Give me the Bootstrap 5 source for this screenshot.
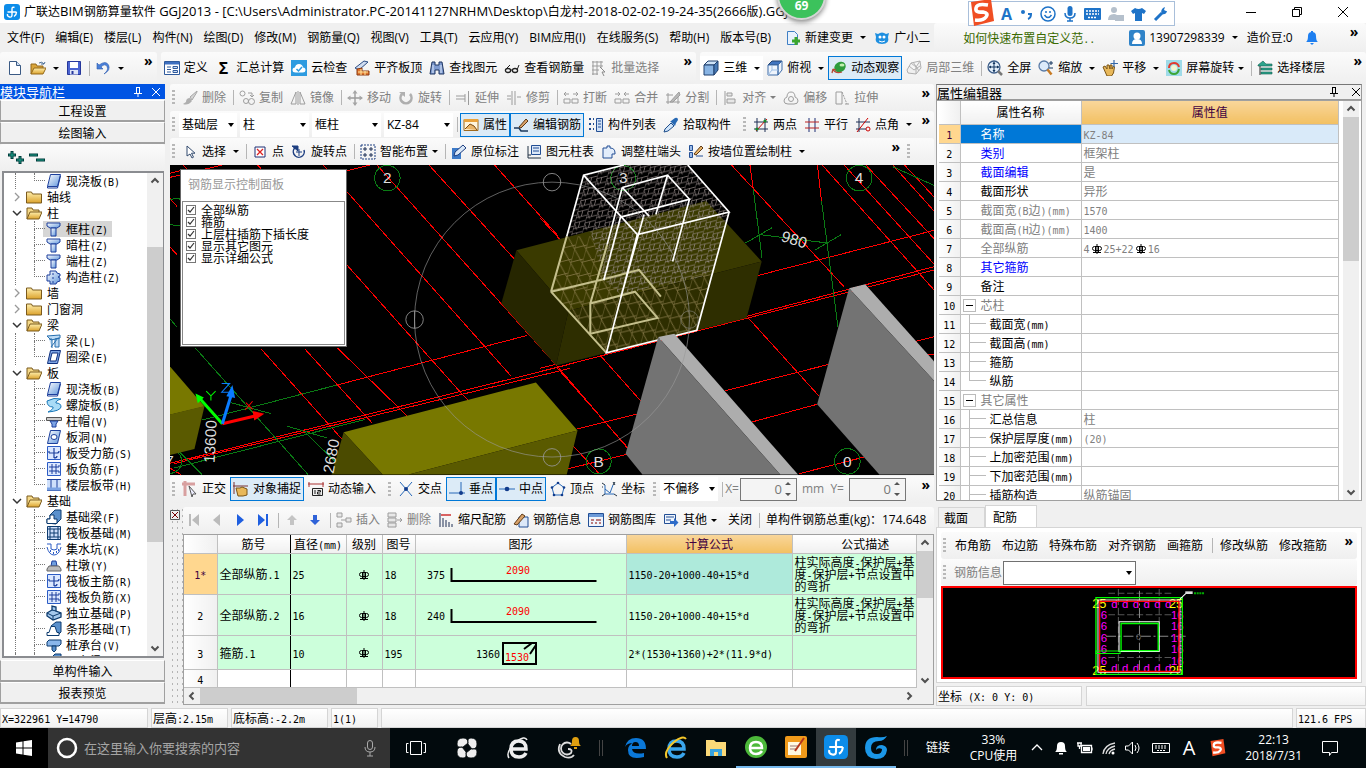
<!DOCTYPE html>
<html lang="zh-CN">
<head>
<meta charset="utf-8">
<meta name="viewport" content="width=device-width, initial-scale=1">
<title>广联达BIM钢筋算量软件 GGJ2013</title>
<link href="https://cdn.jsdelivr.net/npm/bootstrap@5.3.0/dist/css/bootstrap.min.css" rel="stylesheet">
<style>
:root{--line:#c0c0c0;--edge:#a0a0a0;--face:#f0f0f0}
body{font-family:"Open Sans","Noto Sans CJK SC",sans-serif;font-size:12px;line-height:16px;color:#000;background:var(--face);height:100vh;min-height:600px;overflow:hidden}
.song{font-family:"Noto Sans CJK SC",sans-serif;font-size:12px}
.uifont{font-family:"Open Sans","Noto Sans CJK SC",sans-serif}
.lt{font-family:"DejaVu Sans Mono",monospace;font-size:10px;line-height:0;white-space:pre}
.ic{width:16px;height:16px;flex:none}
.titlebar{height:23px;background:#fff}
.titlebar .seg{font-size:13px}
.menubar{height:29px;padding-left:2px}
.menubar a{color:#000;text-decoration:none;padding:0 6px 0 5px;white-space:nowrap}
.menubar a.inline-ic{display:inline-flex;align-items:center;gap:4px;padding:0 4px}
.menubar a.tip{color:#3a6a00}
.pill{background:linear-gradient(#fbfbfb,#efefef);border-radius:3px}
.mainbar{height:32px}
.tb{--bs-btn-padding-x:2px;--bs-btn-padding-y:0;--bs-btn-font-size:12px;--bs-btn-line-height:16px;--bs-btn-border-radius:0;--bs-btn-color:#000;--bs-btn-disabled-color:#808080;--bs-btn-disabled-opacity:1;--bs-btn-disabled-border-color:transparent;display:inline-flex;align-items:center;gap:4px;height:24px;white-space:nowrap;flex:none}
.tb:disabled .ic{filter:grayscale(1);opacity:.55}
.tb.on{background:#dcebf7;border-color:#0078d7}
.dd::after{content:"";width:0;height:0;border:3px solid transparent;border-top-color:currentColor;border-bottom:0;margin-left:3px}
.dd.tight::after{margin-left:0}
.bars{gap:1px;min-width:0;overflow:hidden}
.vsep{width:1px;height:15px;background:#b5b5b5;margin:0 1px 0 3px;flex:none}
.grip{width:3px;height:15px;flex:none;margin:0 3px 0 2px;background:repeating-linear-gradient(#b8b8b8 0 2px,transparent 2px 4px)}
.more{font-weight:700;font-size:14px;line-height:12px;align-self:flex-start;margin:3px 4px 0 auto;background:none;border:0;padding:0;flex:none;color:#000}
.combo.form-select{border:0;border-radius:0;height:24px;padding:0 14px 0 3px;font-size:12px;line-height:16px;color:#000;background-color:#fff;background-position:right 3px center;background-size:6px 4px;background-image:url("data:image/svg+xml,%3Csvg xmlns='http://www.w3.org/2000/svg' viewBox='0 0 6 4'%3E%3Cpath d='M0 0h6L3 4z'/%3E%3C/svg%3E");width:69px;flex:none}
.combo.next{margin-left:2px}
.combo.short{width:58px}
.combo.framed{border:1px solid #707070;width:133px}
.spin{width:57px;height:23px;border:1px solid #777;background:#f4f4f4;flex:none}
.spin input{width:41px;border:0;background:none;text-align:right;color:#777;padding:0;font-size:13px}
.spin svg{width:12px;height:18px}
.leftcol{width:165px;flex:none}
.centercol{margin:0 2px 0 5px}
.paneltitle{height:15px;font-size:13px;line-height:15px;flex:none}
.paneltitle button{border:0;background:none;padding:0;color:inherit;line-height:0}
.bluehead{background:#0054e3;color:#fff;margin-bottom:1px}
.navbtn{height:22px;border:1px solid #a0a0a0;border-top-color:#fff;border-bottom-width:2px;background:var(--face);padding:1px 0 0;text-align:center;border-radius:0;flex:none;line-height:16px}
.navbtn.last{margin-bottom:3px}
.treebox{border:2px solid #8a8c90;border-right-width:1px;background:#fff;margin:0 1px 2px 2px}
.tree li{height:16px;display:flex;align-items:center;position:relative;white-space:nowrap}
.tree .node{padding-left:8px}
.tree .node .ic{margin:0 5px 0 4px}
.tree .tw{width:10px;height:10px}
.tree .leaf{padding-left:42px}
.tree .leaf::before{content:"";position:absolute;left:30px;width:11px;top:0;height:8px;border-left:1px dotted #777;border-bottom:1px dotted #777}
.tree .leaf::after{content:"";position:absolute;left:11px;top:0;height:16px;border-left:1px dotted #777}
.tree .leaf.mid .tail{position:absolute;left:30px;top:8px;height:8px;border-left:1px dotted #777}
.tree .leaf span.name{padding:0 4px;line-height:16px}
.tree .leaf.sel{z-index:0}
.tree .leaf.sel .back{position:absolute;left:39px;width:69px;top:0;height:16px;background:#d6d6d6;z-index:-1}
.sb{background:#f0f0f0;flex:none}
.sb.v{width:16px}.sb.h{height:16px}
.sb .thumb{background:#cdcdcd}
.sb svg{width:16px;height:16px;flex:none}
.view3d{background:#000;min-height:0}
.view3d>svg{width:100%;height:100%;display:block}
.float-panel{left:10px;top:4px;width:167px;height:178px;background:#fff;border:1px solid #666}
.float-panel .cap{height:31px;color:#999;padding:7px 7px 0}
.float-panel .list{border:1px solid #888;height:144px;margin:0 1px;padding:2px 3px}
.float-panel label{height:12px;line-height:12px;gap:5px}
.float-panel input{appearance:none;width:10px;height:10px;border:1px solid #777;margin:0;flex:none;background:#fff url("data:image/svg+xml,%3Csvg xmlns='http://www.w3.org/2000/svg' viewBox='0 0 8 8'%3E%3Cpath d='M1 4l2 2 4-5' fill='none' stroke='%23333' stroke-width='1.2'/%3E%3C/svg%3E")}
.rowbar{height:27px;flex:none}
.snapbar{margin:1px 0 4px}
.gripstrip{width:13px;background-image:radial-gradient(circle,#b4b4b4 1px,transparent 1px);background-size:5px 6px;flex:none}
.frame{border:1px solid var(--edge);background:#fff}
.gridframe{margin-bottom:2px}
.data{width:100%;table-layout:fixed;border-collapse:collapse;line-height:12px}
.data th,.data td{border:1px solid var(--line);padding:0 2px;font-weight:400;overflow:hidden;white-space:nowrap;vertical-align:middle}
.data thead th{background:linear-gradient(#fff,#f0f0f0);text-align:center;border-top:0}
.data tr>:first-child{border-left:0;text-align:center;background:linear-gradient(90deg,#fff,#f0f0f0)}
.data .hot{background:linear-gradient(#f9d69a,#f2c062)!important;color:#400040}
.data .cur{background:#ffd78f!important;color:#400040}
.bars-grid thead th{height:19px}
.bars-grid .bar td{background:#ccffdb}
.bars-grid .tall td,.bars-grid .tall th{height:41px}
.bars-grid .mid td,.bars-grid .mid th{height:34px}
.bars-grid .low td,.bars-grid .low th{height:18px}
.bars-grid .bar td.pick{background:#aeeadb}
.bars-grid tr>:nth-child(2){border-right:1px solid #000}
.bars-grid td .shape{display:block;width:205px;height:32px}
.prop thead th{height:23px;font-size:12px}
.prop tbody td,.prop tbody th{height:19px;line-height:15px}
.prop .nm{padding-left:20px;position:relative}
.prop .nm.sub{padding-left:29px}
.prop .nm.sub::before{content:"";position:absolute;left:8px;top:-1px;width:17px;height:10px;border-left:1px solid #bbb;border-bottom:1px solid #bbb}
.prop .nm.sub.cont::after{content:"";position:absolute;left:8px;top:9px;height:10px;border-left:1px solid #bbb}
.prop .fold{position:absolute;left:2px;top:3px;width:13px;height:13px;border:1px solid #bbb;background:#fff;padding:0;line-height:0}
.prop .fold::after{content:"";display:block;width:7px;height:1px;background:#000;margin:0 auto}
.prop .v{color:#808080}
.prop tr.first .nm{background:#0078d7;color:#fff}
.prop tr.first .v{background:#d9eaf9}
.c-blue{color:#00f}.c-gray{color:#808080}
.rebar{width:12px;height:12px;vertical-align:-2px;margin:0 1px}
.rightcol{width:430px;flex:none}
.whead{border:1px solid #999;border-top-color:#777;height:16px;flex:none}
.propframe{padding:0 2px}
.tabs2{height:22px;padding-left:2px}
.tabs2 button{border:1px solid #d5d5d5;border-bottom:0;background:var(--face);height:20px;padding:0 5px;text-align:left;width:47px;font-size:12px}
.tabs2 button.act{background:#fff;height:22px;width:52px;padding:0 7px}
.txtbar .tb{padding:0 4px}
.tabpage{border-color:#d5d5d5;padding:4px 4px 3px}
.section{border:2px solid #f00;background:#000;height:93px}
.section svg{width:100%;height:100%;display:block}
.cell{border:1px solid #d5d5d5;background:linear-gradient(#fff,#f2f2f2);height:20px;line-height:17px;padding:0 1px;white-space:nowrap}
.coordbar{margin:3px 0 1px}
.statusbar{height:21px;gap:3px;flex:none;padding-top:1px}
.taskbar{height:40px;background:#020a0d;color:#fff;flex:none}
.taskbar button{border:0;background:none;padding:0;width:40px;height:40px;display:flex;align-items:center;justify-content:center;color:#fff;flex:none}
.taskbar .pin svg{width:24px;height:24px}
.taskbar .far{width:51px}
.taskbar .run{border-bottom:2px solid #76b9ed}
.taskbar .focus{background:#333b3e}
.taskbar .startbtn{width:48px;background:#000}
.search{width:342px;background:#333;color:#aaa;gap:6px}
.search input{border:0;background:none;color:#a5a5a5;font-size:13px;padding:0;outline:0;min-width:0}
.search input::placeholder{color:#a5a5a5}
.taskbar .tray button{width:24px}
.tray svg{width:18px;height:18px}
.ime{left:968px;top:1px;width:207px;height:25px;background:#fff;border:1px solid #a9bfda;z-index:5;gap:7px;padding-left:32px}
.ime button{border:0;background:none;padding:0;color:#1e73c8;line-height:0}
.ime .logo2{left:-2px;top:-3px}
.ball{left:777px;top:-29px;width:49px;height:49px;border-radius:50%;background:#3cc25c;border:2px solid #d5d5d5;box-shadow:0 2px 5px #888;color:#fff;font-weight:700;text-align:center;padding-top:27px;z-index:5}
.winbtn button{width:46px;border:0;background:none;padding:0}
</style>
</head>
<body class="d-flex flex-column m-0 position-relative">

<svg width="0" height="0" class="position-absolute" aria-hidden="true"><defs>
<linearGradient id="gb" x1="0" y1="0" x2="1" y2="1"><stop offset="0" stop-color="#fff"/><stop offset="1" stop-color="#5f95dc"/></linearGradient>
<linearGradient id="gy" x1="0" y1="0" x2="0" y2="1"><stop offset="0" stop-color="#ffefad"/><stop offset="1" stop-color="#dba22c"/></linearGradient>
<symbol id="app" viewBox="0 0 16 16"><rect width="16" height="16" rx="3" fill="#0c8ce9"/><path d="M10.500 3.500Q8 2.500 8 5v6q0 2.500-2.500 2Q3 12.500 3.500 10M3.500 8h9M12.500 8q0 3-2.500 4.500" fill="none" stroke="#fff" stroke-width="1.400"/></symbol>
<symbol id="new" viewBox="0 0 16 16"><path d="M2.500 1.500h7l4 4v9h-11z" fill="#fff" stroke="#3b5a84"/><path d="M9.500 1.500v4h4" fill="#cfe0f5" stroke="#3b5a84"/></symbol>
<symbol id="open" viewBox="0 0 16 16"><path d="M1 14V4h5l1 2h6v2" fill="#d9a53a" stroke="#94691a"/><path d="M1 14l3-6h12l-3 6z" fill="url(#gy)" stroke="#94691a"/><path d="M9 3q3-2 5 1l1-2M14 4l-3 0" fill="none" stroke="#466a93"/></symbol>
<symbol id="save" viewBox="0 0 16 16"><path d="M1.500 1.500h13v13h-13z" fill="#4a63d0" stroke="#26379b"/><path d="M4 2h8v6H4z" fill="#fff"/><path d="M4 10h8v4.500H4z" fill="#dfe5f7"/><path d="M5.500 11h2v3h-2z" fill="#26379b"/></symbol>
<symbol id="undo" viewBox="0 0 16 16"><path d="M2 3v6h6L6 7q4-4 6-.500T9 14q7-4 4.500-9T4 5z" fill="#4b80d8" stroke="#2b5bb0" stroke-width=".6"/></symbol>
<symbol id="def" viewBox="0 0 16 16"><path d="M.5 1.500h15v13H.5z" fill="#fff" stroke="#2f5a9c"/><path d="M1 2h14v2.500H1z" fill="#3d6fc0"/><path d="M3 7h4M3 9.500h4M3 12h4" stroke="#2f5a9c"/><path d="M9 6.500h4.500v2H9zM9 10.500h4.500v2H9z" fill="#cfdff5" stroke="#2f5a9c"/></symbol>
<symbol id="cloud" viewBox="0 0 16 16"><path d="M0 0h16v16H0z" fill="#2d9be0"/><path d="M4.500 12.500q-3 0-3-2.500t2.500-2.500Q4.500 4 8 4t4 3.500q2.500 0 2.500 2.500t-3 2.500z" fill="#fff"/><path d="M5.500 9l2 2 3.500-4" fill="none" stroke="#2d9be0" stroke-width="1.500"/></symbol>
<symbol id="flush" viewBox="0 0 16 16"><path d="M1 8l9-7 4 1-9 8z" fill="#cfdcf0" stroke="#2c4d84"/><path d="M3 9v6h12v-4H8V8z" fill="#e0762e" stroke="#8b3a12"/><path d="M4 12h10M7 9v6M11 11v4" stroke="#ffe6a0"/></symbol>
<symbol id="bino" viewBox="0 0 16 16"><path d="M3 2h3v3h4V2h3l2 12h-5v-4H6v4H1z" fill="#7f9bd0" stroke="#1f3560"/><path d="M4 5v8M12 5v8" stroke="#dfe9fa"/></symbol>
<symbol id="glass" viewBox="0 0 16 16"><ellipse cx="4" cy="10.500" rx="2.600" ry="2" fill="none" stroke="#222" stroke-width="1.300"/><ellipse cx="11" cy="10.500" rx="2.600" ry="2" fill="none" stroke="#222" stroke-width="1.300"/><path d="M6.500 10h2M2 9l4-4M13 10l2-5" fill="none" stroke="#222"/></symbol>
<symbol id="batch" viewBox="0 0 16 16"><path d="M1 2h11M1 6h11M1 10h7M1 14h6M2 1v14M6 1v14M10 1v7" stroke="#555" fill="none"/><path d="M9 7l5 5-3 0 2 4" fill="#fff" stroke="#333"/></symbol>
<symbol id="cube" viewBox="0 0 16 16"><path d="M1 5l4-4h10l-4 4z" fill="#cfe3f7" stroke="#20406e"/><path d="M1 5h10v10H1z" fill="#88b4e4" stroke="#20406e"/><path d="M11 5l4-4v9l-4 5z" fill="#4778b4" stroke="#20406e"/></symbol>
<symbol id="topv" viewBox="0 0 16 16"><path d="M1 5l4-4h10l-4 4z" fill="#3f74c0" stroke="#20406e"/><path d="M1 5h10v10H1zM11 5l4-4v9l-4 5z" fill="#eef4fc" stroke="#3f6ca8"/><path d="M5 6v4L1 15M5 10h6" fill="none" stroke="#9fc0e6"/></symbol>
<symbol id="orbit" viewBox="0 0 16 16"><ellipse cx="9" cy="7" rx="6" ry="5" fill="#2d9c3c" transform="rotate(-35 9 7)"/><ellipse cx="11" cy="5" rx="2.500" ry="1.500" fill="#bff0b0"/><path d="M2 9q2 5 9 3M2 9l-1 4M2 9l3 1" fill="none" stroke="#b54a35" stroke-width="1.300"/></symbol>
<symbol id="part3" viewBox="0 0 16 16"><path d="M1 10l4-7 9-2 1 7-5 6-8-1zM5 3l5 4 4-6M10 7v7M3 6l5 4 6-4M7 2l6 9" fill="#eee" stroke="#777"/></symbol>
<symbol id="full" viewBox="0 0 16 16"><circle cx="7" cy="7" r="6" fill="#e4effb" stroke="#3f5f8a" stroke-width="1.300"/><path d="M7 2.500v9M2.500 7h9" stroke="#12355f"/><path d="M7 1.500L5.500 4h3zM7 12.500L5.500 10h3zM1.500 7L4 5.500v3zM12.500 7L10 5.500v3z" fill="#12355f"/><path d="M11 11l4 4" stroke="#777" stroke-width="2.500"/></symbol>
<symbol id="zoomi" viewBox="0 0 16 16"><circle cx="6" cy="6" r="5" fill="#dceafa" stroke="#5a7ba6" stroke-width="1.300"/><path d="M9.500 9.500l4 5" stroke="#c77a23" stroke-width="2.500"/><path d="M13 1v4M11 3h4M11 8h4" stroke="#12355f"/></symbol>
<symbol id="pan" viewBox="0 0 16 16"><path d="M1 7l2-1 2 3V5l2 0 1 4 0-4h2l0 4 1.500-3 1 1-1 6-2 3H5z" fill="#e8b85a" stroke="#7a5415"/><path d="M12 0v7M8.500 3.500H16" stroke="#3468a8" stroke-width="1.200"/></symbol>
<symbol id="rotv" viewBox="0 0 16 16"><path d="M0 0h16v16H0z" fill="#9fdbe8"/><path d="M3 8q0-5 5-5 4 0 5 4" fill="none" stroke="#e23b2e" stroke-width="2"/><path d="M13 9q-1 5-5 5-4 0-5-4" fill="none" stroke="#3ba537" stroke-width="2"/><circle cx="8" cy="8" r="3" fill="#f3f7d0"/></symbol>
<symbol id="floors" viewBox="0 0 16 16"><path d="M1 5l5-4 3 3H15v2H1zM4 8h11v2H4zM4 12h11v2H4z" fill="#2ca48c" stroke="#155f52" stroke-width=".6"/><path d="M3 6v9" stroke="#222"/></symbol>
<symbol id="brush" viewBox="0 0 16 16"><path d="M15 1L8 7l2 3 5-8z" fill="#bbb" stroke="#666"/><path d="M8 8q-4 0-4 4l-3 2q5 2 9-3z" fill="#777"/></symbol>
<symbol id="copy" viewBox="0 0 16 16"><circle cx="3.500" cy="3.500" r="2.500" fill="none" stroke="#555"/><circle cx="7" cy="11" r="2.500" fill="none" stroke="#555"/><circle cx="12.500" cy="11.500" r="3" fill="none" stroke="#555"/><path d="M9 3h4v4M13 7l-2-2M13 7l2-2" fill="none" stroke="#555"/></symbol>
<symbol id="mirror" viewBox="0 0 16 16"><path d="M6 2v12H1zM10 2v12h5z" fill="none" stroke="#555"/><path d="M8 1v14" stroke="#555"/></symbol>
<symbol id="move" viewBox="0 0 16 16"><path d="M8 1v14M1 8h14" stroke="#555" stroke-width="1.400"/><path d="M8 0L5.500 3.500h5zM8 16l-2.500-3.500h5zM0 8l3.500-2.500v5zM16 8l-3.500-2.500v5z" fill="#666"/></symbol>
<symbol id="rot" viewBox="0 0 16 16"><path d="M4 4a5.500 5.500 0 1 0 8 0" fill="none" stroke="#777" stroke-width="2.600"/><path d="M1 2h6v5z" fill="#777"/></symbol>
<symbol id="extend" viewBox="0 0 16 16"><path d="M1 6h9M1 9h9M10 4v8M13.500 1v14" stroke="#555" fill="none"/></symbol>
<symbol id="trim" viewBox="0 0 16 16"><path d="M6 1v14M9 1v14M1 6h4M1 9h4M11 7h4" stroke="#555" fill="none"/></symbol>
<symbol id="brk" viewBox="0 0 16 16"><path d="M1 9h6v4H1zM9 9h6v4H9z" fill="none" stroke="#555"/><path d="M1 4h5M3 2L1 4l2 2M10 4h5M13 2l2 2-2 2" fill="none" stroke="#555"/></symbol>
<symbol id="joinp" viewBox="0 0 16 16"><path d="M1 9h6v4H1zM9 9h6v4H9z" fill="none" stroke="#555"/><path d="M1 4h5M4 2l2 2-2 2M10 4h5M12 2l-2 2 2 2" fill="none" stroke="#555"/></symbol>
<symbol id="split" viewBox="0 0 16 16"><path d="M1 5h7M1 12h14M3 3v11M13 6v8" stroke="#555"/><path d="M5 12l9-10 1 3-7 7z" fill="#888" stroke="#555"/></symbol>
<symbol id="alignl" viewBox="0 0 16 16"><path d="M3 1v14M5 3h5v3H5zM5 9h8v4H5z" fill="#ddd" stroke="#555"/></symbol>
<symbol id="off" viewBox="0 0 16 16"><path d="M1 11q0-3 3-4 0-5 4-5t4 5q3 1 3 4t-4 3H5q-4 0-4-3z" fill="none" stroke="#555"/><circle cx="8" cy="9" r="2.500" fill="none" stroke="#555"/></symbol>
<symbol id="stretch" viewBox="0 0 16 16"><path d="M2 2h6v12H2z" fill="none" stroke="#555"/><path d="M8 2l5 12" stroke="#555" stroke-dasharray="2 1"/><path d="M11 14h4" stroke="#555"/></symbol>
<symbol id="prop" viewBox="0 0 16 16"><path d="M1 2.500h14v11H1z" fill="#fff5dc" stroke="#a06a1c"/><path d="M1 2h14v3H1z" fill="#e9a23b"/><path d="M2 12l5-5 4 2 3 4" fill="#e9b569" stroke="#7a4a12"/></symbol>
<symbol id="editst" viewBox="0 0 16 16"><path d="M1 11h5l2 3h7" stroke="#1c3a5c" fill="none" stroke-width="1.500"/><path d="M6 10l7-8 2 2-7 7z" fill="#d8a26a" stroke="#5e3a16"/></symbol>
<symbol id="list" viewBox="0 0 16 16"><path d="M1 2h2M1 7h2M1 12h2M5 2h1M5 7h1M5 12h1" stroke="#234f95" stroke-width="2"/><path d="M8.500 1.500h6v13h-6z" fill="#cfe0f5" stroke="#234f95"/><path d="M10 4h3M10 7h3M10 10h3" stroke="#234f95"/></symbol>
<symbol id="picker" viewBox="0 0 16 16"><path d="M1 15l1-3 6-6 3 3-6 5z" fill="#cfe4fa" stroke="#1f4e8b"/><path d="M8 4l4-3q3-1 3 2l-2 3-1 3-5-5z" fill="#2869b4"/></symbol>
<symbol id="twop" viewBox="0 0 16 16"><path d="M4 1v14M12 1v14M1 5h14M1 12h14" stroke="#1f2f55"/><path d="M3 14L14 2" stroke="#c00"/><circle cx="12" cy="4" r="1.600" fill="#1a8a2c"/><circle cx="4" cy="12" r="1.600" fill="#1a8a2c"/></symbol>
<symbol id="para" viewBox="0 0 16 16"><path d="M5 1v14M11 1v14" stroke="#1f2f75"/><path d="M1 5h14M1 11h14" stroke="#b22"/></symbol>
<symbol id="pang" viewBox="0 0 16 16"><path d="M4 1v14M1 5h14M1 12h10" stroke="#1f2f55"/><path d="M2 15L13 1" stroke="#c00"/><circle cx="13" cy="12" r="2" fill="none" stroke="#c00"/></symbol>
<symbol id="cursor" viewBox="0 0 16 16"><path d="M5 2v10l3-2 2 4 1.500-.8-2-4H13z" fill="#fff" stroke="#334b6e"/></symbol>
<symbol id="pt" viewBox="0 0 16 16"><path d="M3 3h10v10H3z" fill="#fff" stroke="#1f2f75"/><path d="M5 5l6 6M11 5l-6 6" stroke="#d22" stroke-width="1.300"/></symbol>
<symbol id="rotpt" viewBox="0 0 16 16"><path d="M5 3a5.500 5.500 0 1 0 8 3" fill="none" stroke="#1d3e80" stroke-width="1.500"/><path d="M1 2h6v5zM8 5v7M5 8h6" stroke="#1d3e80" fill="#1d3e80"/></symbol>
<symbol id="smart" viewBox="0 0 16 16"><path d="M1 1h14v14H1z" fill="none" stroke="#1d3e80" stroke-dasharray="2 1"/><path d="M5 3v4M3 5h4M11 3v4M9 5h4M5 9v4M3 11h4M11 9v4M9 11h4" stroke="#1d2f55"/></symbol>
<symbol id="note" viewBox="0 0 16 16"><path d="M1 4h9v11H1z" fill="#3e7bc8"/><path d="M3 12l1-4 8-7 3 3-8 7z" fill="#d9e7f7" stroke="#1d3e80"/></symbol>
<symbol id="tabl" viewBox="0 0 16 16"><path d="M5.500 1.500h9v9h-9z" fill="#dce8f8" stroke="#234f95"/><path d="M7 4h6M7 7h6" stroke="#234f95"/><path d="M2 2v12h13M2 11h3" stroke="#234" fill="none"/></symbol>
<symbol id="adj" viewBox="0 0 16 16"><path d="M2 14V4h4V2h3v2q5 0 5 5v1h-3v4z" fill="#e2edfb" stroke="#234f95"/></symbol>
<symbol id="wallc" viewBox="0 0 16 16"><path d="M1.500 1.500h3v5h-3zM1.500 8.500h3v5h-3zM8 12h7" fill="#9bbbe8" stroke="#234f95"/><path d="M6 10l7-8 2 2-7 7z" fill="#e9b569" stroke="#5e3a16"/></symbol>
<symbol id="ortho" viewBox="0 0 16 16"><path d="M0 3h13M3 0v15" stroke="#d8a0a0" stroke-width="3"/><path d="M7 5l7 8-3 0-1 3z" fill="#eef" stroke="#555"/></symbol>
<symbol id="snap" viewBox="0 0 16 16"><path d="M1 1v12M0 5h15" stroke="#7a3030"/><path d="M3 7h4l2-1 5 2v6l-4 1H5z" fill="#e8b85a" stroke="#7a5415"/></symbol>
<symbol id="dyn" viewBox="0 0 16 16"><path d="M0 3h16M1 1v5M15 1v5" stroke="#a33"/><path d="M4.500 7.500h10v7h-10z" fill="#eee" stroke="#222"/><path d="M7 9v4M9.500 9.500h3v1.500h-3v2h3" stroke="#222" fill="none"/></symbol>
<symbol id="cross" viewBox="0 0 16 16"><path d="M2 1l12 14M14 1L2 15" stroke="#2668b8"/><circle cx="8" cy="8" r="2" fill="#123c8c"/></symbol>
<symbol id="perp" viewBox="0 0 16 16"><path d="M0 12h16M12 1v11" stroke="#2668b8"/><circle cx="12" cy="12" r="2" fill="#123c8c"/></symbol>
<symbol id="midp" viewBox="0 0 16 16"><path d="M0 8h16" stroke="#2668b8"/><circle cx="8" cy="8" r="2.300" fill="#123c8c"/></symbol>
<symbol id="penta" viewBox="0 0 16 16"><path d="M8 2l6 4.500L12 14H4L2 6.500z" fill="none" stroke="#2668b8"/><g fill="#123c8c"><circle cx="8" cy="2" r="1.300"/><circle cx="14" cy="6.500" r="1.300"/><circle cx="12" cy="14" r="1.300"/><circle cx="4" cy="14" r="1.300"/><circle cx="2" cy="6.500" r="1.300"/></g></symbol>
<symbol id="coord" viewBox="0 0 16 16"><path d="M4 4v9h9M4 8l5 4 3-8" fill="none" stroke="#2668b8"/><path d="M1 2l3 2M14 1l-2 3M1 15l3-2M13 13l3 2M14 4l-2-3M1 6h1" stroke="#234"/></symbol>
<symbol id="nfirst" viewBox="0 0 16 16"><path d="M3 2h2v12H3zM13 2v12L6 8z" fill="#bbb"/></symbol>
<symbol id="nprev" viewBox="0 0 16 16"><path d="M11 2v12L4 8z" fill="#bbb"/></symbol>
<symbol id="nnext" viewBox="0 0 16 16"><path d="M5 2v12l7-6z" fill="#1f5fe0"/></symbol>
<symbol id="nlast" viewBox="0 0 16 16"><path d="M11 2h2v12h-2zM3 2v12l7-6z" fill="#1f5fe0"/></symbol>
<symbol id="nup" viewBox="0 0 16 16"><path d="M8 3l5 5h-3v5H6V8H3z" fill="#c4c4c4"/></symbol>
<symbol id="ndn" viewBox="0 0 16 16"><path d="M8 13l5-5h-3V3H6v5H3z" fill="#2f62d8"/></symbol>
<symbol id="ins" viewBox="0 0 16 16"><path d="M1 1h5v4H1zM1 11h5v4H1zM10 6h5v4h-5zM10 8H5" fill="#ddd" stroke="#555"/></symbol>
<symbol id="del" viewBox="0 0 16 16"><path d="M1 1h8v4H1zM1 6h8v4H1zM1 11h8v4H1zM10 8h5M13 6l2 2-2 2" fill="#ddd" stroke="#555"/></symbol>
<symbol id="scale" viewBox="0 0 16 16"><path d="M2 1v14M5 6v9M8 8v7M11 10v5M14 12v3" stroke="#1f2f55"/><path d="M3 3h10" stroke="#c22" stroke-width="1.400"/></symbol>
<symbol id="info" viewBox="0 0 16 16"><path d="M6 5h9v10H6z" fill="#dce8f8" stroke="#234f95"/><path d="M1 12l8-10 3 2-8 9z" fill="#d8a26a" stroke="#5e3a16"/></symbol>
<symbol id="lib" viewBox="0 0 16 16"><path d="M.5 1.500h15v13H.5z" fill="#eef4fc" stroke="#234f95"/><path d="M1 2h14v3H1z" fill="#6c9ad8"/><path d="M3 8h3M3 11h2M7 11h2M11 11h2M8 8h5" stroke="#a55" stroke-width="1.500"/></symbol>
<symbol id="other" viewBox="0 0 16 16"><path d="M1.500 2.500h11v9h-11z" fill="#eef4fc" stroke="#234f95"/><path d="M3 5h8M3 8h5" stroke="#234f95"/><path d="M7 9h4V6l4.500 4.500L11 15v-3H7z" fill="#2f6cc8"/></symbol>
<symbol id="fold" viewBox="0 0 16 16"><path d="M.5 14V3h5l1 2h9v9z" fill="url(#gy)" stroke="#7b5a1d"/></symbol>
<symbol id="foldo" viewBox="0 0 16 16"><path d="M1 14V3h5l1 2h6v3" fill="#f5d988" stroke="#7b5a1d"/><path d="M1 14l3-7h12l-3 7z" fill="url(#gy)" stroke="#7b5a1d"/></symbol>
<symbol id="t-slab" viewBox="0 0 16 16"><path d="M4.500 1.500h10l-3 12h-10z" fill="url(#gb)" stroke="#1c3f9c"/><path d="M1.500 13.500v1.500h10l3-12" fill="none" stroke="#1c3f9c"/></symbol>
<symbol id="t-col" viewBox="0 0 16 16"><path d="M1 2h13v3l-3 2H4L1 5z" fill="url(#gb)" stroke="#1c3f9c"/><path d="M5 7h5v8H5z" fill="url(#gb)" stroke="#1c3f9c"/></symbol>
<symbol id="t-pcol" viewBox="0 0 16 16"><path d="M4 2h6l1 2 3 1v2l-2 1 2 1v3l-3 1-1 2H4v-3H1V6h3z" fill="url(#gb)" stroke="#1c3f9c"/><path d="M7 4v10" stroke="#1c3f9c" stroke-dasharray="2 2"/></symbol>
<symbol id="t-beam" viewBox="0 0 16 16"><path d="M1 3l13-1v3L5 7zM3 6h3v9M9 6l4-1v9H9z" fill="#bfdcf5" stroke="#276fae"/><path d="M5 14l7-9" stroke="#276fae"/></symbol>
<symbol id="t-ring" viewBox="0 0 16 16"><path d="M4.500 1.500h10l-3 13h-10z" fill="#7da4e4" stroke="#0e2f7c"/><path d="M6 4h6l-2 8H4z" fill="#fff" stroke="#0e2f7c"/></symbol>
<symbol id="t-spiral" viewBox="0 0 16 16"><path d="M1 4q7-4 14-2-6 2-5 4 5 0 5 4-1 4-13 5 6-3 5-5-6 0-6-6z" fill="#a9dcf7" stroke="#1877b8"/></symbol>
<symbol id="t-cap" viewBox="0 0 16 16"><path d="M.5 4.500h15v3H.5z" fill="#ccc" stroke="#555"/><path d="M4 8h8l-2 3v3H6v-3z" fill="#7da4e4" stroke="#1c3f9c"/></symbol>
<symbol id="t-hole" viewBox="0 0 16 16"><path d="M4.500 1.500h10l-3 13h-10z" fill="url(#gb)" stroke="#1c3f9c"/><ellipse cx="8" cy="8" rx="3" ry="2.500" fill="#fff" stroke="#1c3f9c"/></symbol>
<symbol id="t-bar" viewBox="0 0 16 16"><path d="M1.500 1.500h13v13h-13z" fill="#dbe8ff" stroke="#2c5cc5"/><path d="M8 3v10M3 8h8q2 0 2-2M3 8V6M8 13q3 0 3-2" fill="none" stroke="#1c3f9c" stroke-width="1.200"/></symbol>
<symbol id="t-neg" viewBox="0 0 16 16"><path d="M1.500 1.500h13v13h-13z" fill="#dbe8ff" stroke="#2c5cc5"/><path d="M6 3v10M10 3v10M3 6h10v-2M3 10h10v2" fill="none" stroke="#1c3f9c"/></symbol>
<symbol id="t-band" viewBox="0 0 16 16"><path d="M1 2.500h14v11H1z" fill="#cfe0fb"/><path d="M1 2.500h14M1 13.500h14M5 3v10M11 3v10" stroke="#1c3f9c"/><path d="M1 12h14" stroke="#7da4e4" stroke-width="3"/></symbol>
<symbol id="t-fbeam" viewBox="0 0 16 16"><path d="M1 14V10h3V6l5-5h6v9l-5 5z" fill="#5a90cc" stroke="#0d3b6e"/><path d="M1 14.500V10h3V6h4v4h3v4.500z" fill="#fff" stroke="#0d3b6e"/></symbol>
<symbol id="t-raft" viewBox="0 0 16 16"><path d="M1.500 1.500h13v13h-13z" fill="#cfe0fb" stroke="#0d3b6e"/><path d="M4 1v14M8 4v8M12 1v14M1 4h14M4 8h8M1 12h14" stroke="#0d3b6e"/></symbol>
<symbol id="t-pit" viewBox="0 0 16 16"><path d="M1 3h4v5q3 2 6 0V3h4M1 6q2 8 7 8t7-8" fill="none" stroke="#2c5cc5"/><path d="M4 10h1M7 12h1M10 11h1M12 9h1" stroke="#2c5cc5" stroke-width="2"/></symbol>
<symbol id="t-pier" viewBox="0 0 16 16"><path d="M5 9l1-5h4l1 5z" fill="#6f9fe0" stroke="#1c3f9c"/><path d="M3 9h10l2 3v2H1v-2z" fill="#bbb" stroke="#666"/></symbol>
<symbol id="t-iso" viewBox="0 0 16 16"><path d="M1 8l5-3V1l4 1v4l5 2v4l-8 3-6-4z" fill="#a4c8ec" stroke="#0d3b6e" stroke-width="1.300"/><path d="M1 8l6 3 8-3M7 11v4M6 5l4 1" fill="none" stroke="#0d3b6e"/></symbol>
<symbol id="t-strip" viewBox="0 0 16 16"><path d="M5 5l5-4h5v10l-4 4z" fill="#5a90cc" stroke="#0d3b6e"/><path d="M1 14.500v-3h2l2-6h4l2 6h2v3z" fill="#fff" stroke="#0d3b6e"/></symbol>
<symbol id="t-pile" viewBox="0 0 16 16"><path d="M1 5l2-2h12v4l-2 2H1z" fill="#8ab6ea" stroke="#0d3b6e"/><path d="M6 9h4v4l-2 2-2-2z" fill="#5a90cc" stroke="#0d3b6e"/></symbol>
<symbol id="rb" viewBox="0 0 12 12"><path d="M6 1v10M2 9.500h8M4.500 3.500v6M7.500 3.500v6M3.500 3.500h5q2 0 2 2t-2 2h-5q-2 0-2-2t2-2" fill="none" stroke="#000"/></symbol>
<symbol id="up" viewBox="0 0 16 16"><path d="M4.500 9.500L8 6l3.500 3.500" fill="none" stroke="#505050" stroke-width="2"/></symbol>
<symbol id="dn" viewBox="0 0 16 16"><path d="M4.500 6.500L8 10l3.500-3.500" fill="none" stroke="#505050" stroke-width="2"/></symbol>
<symbol id="lf" viewBox="0 0 16 16"><path d="M9.500 4.500L6 8l3.500 3.500" fill="none" stroke="#505050" stroke-width="2"/></symbol>
<symbol id="rg" viewBox="0 0 16 16"><path d="M6.500 4.500L10 8l-3.500 3.500" fill="none" stroke="#505050" stroke-width="2"/></symbol>
<symbol id="pinic" viewBox="0 0 10 10"><path d="M3 .5h4M3.500 0v6M6.500 0v6M1 6.500h8M5 6v4" fill="none" stroke="currentColor"/></symbol>
<symbol id="xic" viewBox="0 0 10 10"><path d="M1 1l8 8M9 1L1 9" fill="none" stroke="currentColor"/></symbol>
<symbol id="sogou" viewBox="0 0 28 28"><path d="M4 3l20-3 3 22-20 5z" fill="#f04e23"/><path d="M21 6q-11-2-12 3t7 4q6 1 3 5T8 21" fill="none" stroke="#fff" stroke-width="3.600"/></symbol>
<symbol id="spinic" viewBox="0 0 12 18"><path d="M3 5h6L6 2zM3 13h6l-3 3z" fill="#555"/></symbol>
</defs></svg>

<header class="titlebar d-flex align-items-center flex-shrink-0 ps-1">
  <svg class="ic me-1"><use href="#app"/></svg>
  <span class="text-nowrap">广联达<span class="seg">BIM</span>钢筋算量软件<span class="seg"> GGJ2013 - [C:\Users\Administrator.PC-20141127NRHM\Desktop\</span>白龙村<span class="seg">-2018-02-02-19-24-35(2666</span>版<span class="seg">).GGJ12]</span></span>
  <div class="winbtn ms-auto d-flex">
    <button aria-label="最小化"><svg width="12" height="12"><path d="M1 6.500h10" stroke="#000"/></svg></button>
    <button aria-label="还原"><svg width="12" height="12"><path d="M1.500 3.500h7v7h-7zM3.500 3.500v-2h7v7h-2" fill="none" stroke="#000"/></svg></button>
    <button aria-label="关闭"><svg width="12" height="12"><path d="M1 1l10 10M11 1L1 11" stroke="#000"/></svg></button>
  </div>
</header>
<div class="ball position-absolute lh-1">69</div>
<div class="ime position-absolute d-flex align-items-center">
  <svg class="logo2 position-absolute" width="28" height="28"><use href="#sogou"/></svg>
  <button class="fs-6 fw-bold lh-1" aria-label="英文">A</button>
  <button aria-label="标点"><svg width="14" height="16"><circle cx="4" cy="6" r="2" fill="currentColor"/><path d="M9 8h3q0 4-3 5" fill="none" stroke="currentColor" stroke-width="2"/></svg></button>
  <button aria-label="表情"><svg width="16" height="16"><circle cx="8" cy="8" r="7" fill="none" stroke="currentColor" stroke-width="1.500"/><path d="M4.500 9q3.500 5 7 0M6 5v2M10 5v2" fill="none" stroke="currentColor" stroke-width="1.500"/></svg></button>
  <button aria-label="语音"><svg width="14" height="16"><rect x="4.500" width="5" height="10" rx="2.500" fill="currentColor"/><path d="M2 7q0 5 5 5t5-5M7 12v3M4 15h6" fill="none" stroke="currentColor" stroke-width="1.500"/></svg></button>
  <button aria-label="软键盘"><svg width="17" height="16"><rect x="0" y="2" width="17" height="12" rx="1" fill="currentColor"/><path d="M2 5h13M2 8h13M4 11.500h9" stroke="#fff" stroke-width="1.300" stroke-dasharray="2 1"/></svg></button>
  <button aria-label="用户"><svg width="16" height="16" fill="#b5c0cc"><circle cx="6" cy="4" r="3"/><path d="M0 14q0-6 6-6 3 0 3 2v4z"/><rect x="7" y="9" width="9" height="6"/></svg></button>
  <button aria-label="皮肤"><svg width="15" height="16"><path d="M4 2q3.500 2 7 0l4 3-2 3-2-1v8H4V7L2 8 0 5z" fill="currentColor"/></svg></button>
  <button aria-label="工具"><svg width="16" height="16"><path d="M2 14l7-7" stroke="currentColor" stroke-width="3"/><path d="M14 5q-1 4-5 3-2-3 1-6l2-1-1 3 2 1z" fill="currentColor"/></svg></button>
</div>

<nav class="menubar d-flex align-items-center flex-shrink-0">
  <div class="d-flex align-items-center">
    <a href="#">文件(F)</a><a href="#">编辑(E)</a><a href="#">楼层(L)</a><a href="#">构件(N)</a><a href="#">绘图(D)</a><a href="#">修改(M)</a><a href="#">钢筋量(Q)</a><a href="#">视图(V)</a><a href="#">工具(T)</a><a href="#">云应用(Y)</a><a href="#">BIM应用(I)</a><a href="#">在线服务(S)</a><a href="#">帮助(H)</a><a href="#">版本号(B)</a>
    <a href="#" class="inline-ic dd ms-1"><svg class="ic" viewBox="0 0 16 16"><path d="M2.500 1.500h7l3 3v10h-10z" fill="#e8f2fd" stroke="#3f7fc4"/><path d="M11 7v8M7 11h8" stroke="#3aa62c" stroke-width="3"/></svg>新建变更</a>
    <a href="#" class="inline-ic"><svg class="ic" viewBox="0 0 16 16"><path d="M1 3l3 1q4-3 8 0l3-1-1 4q2 7-6 7T2 7z" fill="#1e8fe0"/><circle cx="6" cy="7" r="1.500" fill="#fff"/><circle cx="10" cy="7" r="1.500" fill="#fff"/><path d="M5 11q3 2 6 0" stroke="#fff" fill="none"/></svg>广小二</a>
  </div>
  <div class="pill d-flex align-items-center ms-auto h-100 ps-2 pe-1">
    <a href="#" class="song tip me-4 ms-3">如何快速布置自定义范..</a>
    <a href="#" class="inline-ic dd"><svg class="ic" viewBox="0 0 16 16"><rect width="16" height="16" rx="2" fill="#2f83c8"/><circle cx="8" cy="6" r="3.500" fill="#fff"/><path d="M3 14q0-5 5-5t5 5z" fill="#fff"/></svg>13907298339</a>
    <a href="#">造价豆:0</a>
    <a href="#" aria-label="消息"><svg class="ic" viewBox="0 0 16 16"><path d="M2 12q2-1 2-6 0-4 4-4t4 4q0 5 2 6zM7 1h2v2H7zM6 13h4l-2 2z" fill="#1e7ff0"/></svg></a>
    <button class="more ms-4">»</button>
  </div>
</nav>

<div class="mainbar d-flex flex-shrink-0 gap-1">
  <div class="pill bars d-flex align-items-center ps-1">
    <button class="btn tb" aria-label="新建"><svg class="ic"><use href="#new"/></svg></button>
    <button class="btn tb dd" aria-label="打开"><svg class="ic"><use href="#open"/></svg></button>
    <button class="btn tb" aria-label="保存"><svg class="ic"><use href="#save"/></svg></button>
    <span class="vsep"></span>
    <button class="btn tb dd" aria-label="撤销"><svg class="ic"><use href="#undo"/></svg></button>
    <button class="more ms-3">»</button>
  </div>
  <div class="pill bars d-flex align-items-center flex-fill">
    <button class="btn tb"><svg class="ic"><use href="#def"/></svg>定义</button>
    <button class="btn tb"><b class="px-1 fs-6">Σ</b>汇总计算</button>
    <button class="btn tb"><svg class="ic"><use href="#cloud"/></svg>云检查</button>
    <button class="btn tb"><svg class="ic"><use href="#flush"/></svg>平齐板顶</button>
    <button class="btn tb"><svg class="ic"><use href="#bino"/></svg>查找图元</button>
    <button class="btn tb"><svg class="ic"><use href="#glass"/></svg>查看钢筋量</button>
    <button class="btn tb" disabled><svg class="ic"><use href="#batch"/></svg>批量选择</button>
    <button class="more">»</button>
  </div>
  <div class="pill bars d-flex align-items-center">
    <button class="btn tb dd bg-white"><svg class="ic"><use href="#cube"/></svg>三维</button>
    <button class="btn tb dd"><svg class="ic"><use href="#topv"/></svg>俯视</button>
    <button class="btn tb on"><svg class="ic"><use href="#orbit"/></svg>动态观察</button>
    <button class="btn tb" disabled><svg class="ic"><use href="#part3"/></svg>局部三维</button>
    <span class="vsep"></span>
    <button class="btn tb"><svg class="ic"><use href="#full"/></svg>全屏</button>
    <button class="btn tb dd"><svg class="ic"><use href="#zoomi"/></svg>缩放</button>
    <button class="btn tb dd"><svg class="ic"><use href="#pan"/></svg>平移</button>
    <button class="btn tb dd tight"><svg class="ic"><use href="#rotv"/></svg>屏幕旋转</button>
    <span class="vsep"></span>
    <button class="btn tb"><svg class="ic"><use href="#floors"/></svg>选择楼层</button>
    <button class="more ms-4">»</button>
  </div>
</div>

<main class="d-flex flex-fill overflow-hidden">
  <aside class="leftcol d-flex flex-column song">
    <div class="paneltitle bluehead d-flex align-items-center">
      <span>模块导航栏</span>
      <button class="ms-auto me-2" aria-label="固定"><svg width="10" height="10"><use href="#pinic"/></svg></button>
      <button class="me-1" aria-label="关闭"><svg width="10" height="10"><use href="#xic"/></svg></button>
    </div>
    <button class="navbtn">工程设置</button>
    <button class="navbtn">绘图输入</button>
    <div class="pill px-2 py-1 d-flex gap-1 flex-shrink-0">
      <button class="border-0 bg-transparent p-0 lh-1" aria-label="全部展开"><svg width="17" height="19"><path d="M4 3v8M0 7h8M12 8v8M8 12h8" stroke="#003c3c" stroke-width="3"/><path d="M4 4v6M1 7h6M12 9v6M9 12h6" stroke="#1fa08a"/></svg></button>
      <button class="border-0 bg-transparent p-0 lh-1" aria-label="全部折叠"><svg width="17" height="19"><path d="M0 7h9M7 12h9" stroke="#003c3c" stroke-width="3"/><path d="M1 7h7M8 12h7" stroke="#1fa08a"/></svg></button>
    </div>
    <div class="treebox d-flex flex-fill overflow-hidden">
      <ul class="tree list-unstyled m-0 flex-fill overflow-hidden" id="tree"></ul>
      <div class="sb v d-flex flex-column"><svg><use href="#up"/></svg><div style="height:12%"></div><div class="thumb" style="height:61%"></div><svg class="mt-auto"><use href="#dn"/></svg></div>
    </div>
    <button class="navbtn">单构件输入</button>
    <button class="navbtn last">报表预览</button>
  </aside>

  <section class="centercol d-flex flex-column flex-fill overflow-hidden">
    <div class="bars rowbar pill d-flex align-items-center">
      <span class="grip"></span>
      <button class="btn tb" disabled><svg class="ic"><use href="#brush"/></svg>删除</button><span class="vsep"></span>
      <button class="btn tb" disabled><svg class="ic"><use href="#copy"/></svg>复制</button>
      <button class="btn tb" disabled><svg class="ic"><use href="#mirror"/></svg>镜像</button><span class="vsep"></span>
      <button class="btn tb" disabled><svg class="ic"><use href="#move"/></svg>移动</button>
      <button class="btn tb" disabled><svg class="ic"><use href="#rot"/></svg>旋转</button><span class="vsep"></span>
      <button class="btn tb" disabled><svg class="ic"><use href="#extend"/></svg>延伸</button>
      <button class="btn tb" disabled><svg class="ic"><use href="#trim"/></svg>修剪</button><span class="vsep"></span>
      <button class="btn tb" disabled><svg class="ic"><use href="#brk"/></svg>打断</button>
      <button class="btn tb" disabled><svg class="ic"><use href="#joinp"/></svg>合并</button>
      <button class="btn tb" disabled><svg class="ic"><use href="#split"/></svg>分割</button><span class="vsep"></span>
      <button class="btn tb dd tight" disabled><svg class="ic"><use href="#alignl"/></svg>对齐</button>
      <button class="btn tb" disabled><svg class="ic"><use href="#off"/></svg>偏移</button>
      <button class="btn tb" disabled><svg class="ic"><use href="#stretch"/></svg>拉伸</button>
      <button class="more">»</button>
    </div>
    <div class="bars rowbar pill d-flex align-items-center">
      <span class="grip"></span>
      <select class="form-select combo short" aria-label="楼层"><option>基础层</option></select>
      <select class="form-select combo next" aria-label="构件大类"><option>柱</option></select>
      <select class="form-select combo next" aria-label="构件类型"><option>框柱</option></select>
      <select class="form-select combo next" aria-label="构件名称"><option>KZ-84</option></select>
      <span class="vsep"></span>
      <div class="d-flex"><button class="btn tb on"><svg class="ic"><use href="#prop"/></svg>属性</button>
      <button class="btn tb on"><svg class="ic"><use href="#editst"/></svg>编辑钢筋</button></div>
      <button class="btn tb"><svg class="ic"><use href="#list"/></svg>构件列表</button>
      <button class="btn tb"><svg class="ic"><use href="#picker"/></svg>拾取构件</button>
      <span class="grip ms-2"></span>
      <button class="btn tb"><svg class="ic"><use href="#twop"/></svg>两点</button>
      <button class="btn tb"><svg class="ic"><use href="#para"/></svg>平行</button>
      <button class="btn tb dd"><svg class="ic"><use href="#pang"/></svg>点角</button>
      <button class="more">»</button>
    </div>
    <div class="bars rowbar pill d-flex align-items-center">
      <span class="grip"></span>
      <button class="btn tb dd"><svg class="ic"><use href="#cursor"/></svg>选择</button><span class="vsep"></span>
      <button class="btn tb"><svg class="ic"><use href="#pt"/></svg>点</button>
      <button class="btn tb"><svg class="ic"><use href="#rotpt"/></svg>旋转点</button><span class="vsep"></span>
      <button class="btn tb dd tight"><svg class="ic"><use href="#smart"/></svg>智能布置</button><span class="vsep"></span>
      <button class="btn tb"><svg class="ic"><use href="#note"/></svg>原位标注</button>
      <button class="btn tb"><svg class="ic"><use href="#tabl"/></svg>图元柱表</button>
      <button class="btn tb"><svg class="ic"><use href="#adj"/></svg>调整柱端头</button>
      <button class="btn tb dd"><svg class="ic"><use href="#wallc"/></svg>按墙位置绘制柱</button>
      <button class="more">»</button>
      <span class="grip me-4"></span>
    </div>

    <div class="view3d flex-fill position-relative">
      <svg viewBox="0 3 2292 921" preserveAspectRatio="xMidYMid slice" fill="none" stroke-width="3" aria-label="三维视图">
        <defs>
          <pattern id="mesh" width="30" height="33" patternUnits="userSpaceOnUse" patternTransform="skewX(-15)"><path d="M0 0v33M0 11l30-8M0 28l30-8M15 7v17M0 11l12 20" stroke="#9c8f8e" stroke-width="2"/></pattern>
          <pattern id="mesh2" width="34" height="42" patternUnits="userSpaceOnUse" patternTransform="skewX(-15)"><path d="M0 0v42M0 0l34 42M0 40l34-9" stroke="#857848" stroke-width="2.500"/></pattern>
        </defs>
        <g stroke="#f00" shape-rendering="crispEdges">
          <path d="M0 93l30 33M0 237l30 33M0 42L165 3M0 30l50-13M530 22L605 3M48 3l12 12M270 3L870 675 930 740M465 3L1025 632M625 3L1160 600 1370 845M780 3L1045 295M975 3L1165 215M280 550L540 840M410 550L612 772M508 548L715 750M505 658L1073 510M0 893L1200 596M20 892L1200 608M0 900l42 24"/>
          <g transform="translate(1110 0)"><path d="M0 608L620 453M0 618L612 460M0 160l60 65M570 3L905 365M840 3L1182 385M905 3L1182 308M970 3L1182 232M1050 3L1182 150M1085 3L1182 108M625 3l10 72M826 3l12 107M648 332L1182 195M560 468L1182 303M612 460L1182 313M550 675L857 597M630 768L825 715M770 922L965 872M80 908L258 864M112 788L288 744M1120 527L1182 512M1130 568h52M620 458L830 690M180 570L300 705M50 605L262 845M100 840l75 80"/></g>
        </g>
        <g stroke="#0a7a14" shape-rendering="crispEdges">
          <path d="M0 450l30 35M85 548L420 924M20 905L590 760M190 710l120 33M105 762L505 658M357 780l118 35M410 797L540 924M30 850l75 74"/>
          <circle cx="656" cy="42" r="38"/><circle cx="28" cy="143" r="40"/><circle cx="8" cy="885" r="36"/>
          <g transform="translate(1110 0)"><path d="M635 75l26 205M838 110l49 375M612 235l78-45M817 257l80-47M652 210l203 25M1050 8l132 60"/><circle cx="248" cy="42" r="37"/><circle cx="950" cy="42" r="38"/><circle cx="175" cy="885" r="37"/><circle cx="915" cy="885" r="38"/></g>
        </g>
        <path d="M0 592L112 722 0 748z" fill="#787800"/><path d="M0 748L112 720 82 848 0 868z" fill="#5a5a00"/>
        <path d="M526 798L1098 650 1222 793 720 924H642z" fill="#787800"/><path d="M1222 793L1190 924H720z" fill="#5a5a00"/><path d="M526 798L490 924H642z" fill="#4b4b00"/>
        <path d="M1040 257L1605 110 1770 290 1195 437z" fill="#3a3a00"/><path d="M1040 257L995 415 1158 600 1195 437z" fill="#262600"/><path d="M1195 437L1770 290 1725 458 1158 600z" fill="#2e2e00"/>
        <g transform="translate(1110 0)">
          <path d="M130 33L250 3H440L563 143 510 330 240 388 190 345 150 200 80 215z" fill="url(#mesh)"/>
          <path d="M80 215L33 380 198 562 467 495 510 320 240 388 150 215z" fill="url(#mesh2)"/>
          <path d="M33 380L190 343M33 380L198 562M80 215L33 380M150 415L283 380 350 458 150 505zM200 240L150 415M190 343L295 315 360 395" stroke="#c4bf8c" stroke-width="6"/>
          <path d="M250 3L130 33 80 215M130 33L290 210 563 143 440 3M290 210L198 562 467 495 563 143M245 70L380 33 445 105 240 158M245 70L200 240M310 150L240 400M380 33L345 150M240 158L190 345M445 105L395 290M245 70L325 155" stroke="#fff" stroke-width="5"/>
          <path d="M352 515L400 505 768 924H715z" fill="#adadad"/><path d="M352 515L255 862 305 924H715z" fill="#737373"/>
          <path d="M920 370L968 358 1182 597V655z" fill="#adadad"/><path d="M920 370L825 715 1010 924H1182V655z" fill="#737373"/>
        </g>
        <g stroke="#999" stroke-width="2.500"><circle cx="1146" cy="463" r="409" stroke-opacity=".75"/><circle cx="1146" cy="54" r="26"/><circle cx="1146" cy="873" r="26"/><circle cx="737" cy="463" r="26"/><circle cx="1555" cy="463" r="26" stroke-opacity=".6"/><path d="M737 437v52"/></g>
        <g fill="#ddd" font-family="Liberation Sans, sans-serif" font-size="46" text-anchor="middle"><text x="656" y="57">2</text><text x="1358" y="57">3</text><text x="2060" y="57">4</text><text x="1285" y="901">B</text><text x="2025" y="901">0</text><text transform="translate(1862 240) rotate(18)">980</text><text transform="translate(145 827) rotate(-87)">13600</text><text transform="translate(505 872) rotate(-80)">2680</text><text x="8" y="898">7</text></g>
        <path d="M165 773L262 750" stroke="#f00" stroke-width="9"/><path d="M255 735l35 8-30 20z" fill="#f00"/>
        <path d="M165 773L100 700" stroke="#0f0" stroke-width="9"/><path d="M85 683l25 12-18 17z" fill="#0f0"/>
        <path d="M165 773L192 685" stroke="#0a7cff" stroke-width="9"/><path d="M195 658l8 38-26-5z" fill="#0a7cff"/>
        <path d="M163 653h24l-24 26h24" stroke="#0a7cff"/><path d="M117 676l14 14 14-14M131 690v14" stroke="#0f0"/><path d="M235 710l20 20M255 706l-22 26" stroke="#f00"/>
      </svg>
      <div class="float-panel position-absolute">
        <div class="cap">钢筋显示控制面板</div>
        <div class="list song d-flex flex-column">
          <label class="d-flex align-items-center"><input type="checkbox" checked>全部纵筋</label>
          <label class="d-flex align-items-center"><input type="checkbox" checked>箍筋</label>
          <label class="d-flex align-items-center"><input type="checkbox" checked>上层柱插筋下插长度</label>
          <label class="d-flex align-items-center"><input type="checkbox" checked>显示其它图元</label>
          <label class="d-flex align-items-center"><input type="checkbox" checked>显示详细公式</label>
        </div>
      </div>
    </div>

    <div class="bars rowbar snapbar pill d-flex align-items-center">
      <span class="grip"></span>
      <button class="btn tb"><svg class="ic"><use href="#ortho"/></svg>正交</button>
      <button class="btn tb on"><svg class="ic"><use href="#snap"/></svg>对象捕捉</button>
      <button class="btn tb"><svg class="ic"><use href="#dyn"/></svg>动态输入</button>
      <span class="grip ms-2"></span>
      <button class="btn tb"><svg class="ic"><use href="#cross"/></svg>交点</button>
      <div class="d-flex"><button class="btn tb on"><svg class="ic"><use href="#perp"/></svg>垂点</button>
      <button class="btn tb on"><svg class="ic"><use href="#midp"/></svg>中点</button></div>
      <button class="btn tb"><svg class="ic"><use href="#penta"/></svg>顶点</button>
      <button class="btn tb"><svg class="ic"><use href="#coord"/></svg>坐标</button>
      <span class="grip ms-1"></span>
      <select class="form-select combo short" aria-label="偏移方式"><option>不偏移</option></select>
      <span class="vsep"></span>
      <label for="ox" class="c-gray">X=</label>
      <div class="spin d-flex align-items-center"><input id="ox" value="0"><svg><use href="#spinic"/></svg></div>
      <label for="oy" class="c-gray px-1">mm&nbsp;&nbsp;Y=</label>
      <div class="spin d-flex align-items-center"><input id="oy" value="0"><svg><use href="#spinic"/></svg></div>
      <button class="more">»</button>
    </div>

    <div class="d-flex flex-shrink-0">
      <div class="gripstrip"><button class="border-0 p-0 lh-1 bg-transparent" aria-label="关闭"><svg width="10" height="10"><path d="M.5.5h9v9h-9z" fill="#eee" stroke="#555"/><path d="M2 2l6 6M8 2L2 8" stroke="#700"/></svg></button></div>
      <div class="flex-fill overflow-hidden">
        <div class="bars rowbar pill d-flex align-items-center">
          <button class="btn tb" aria-label="首条"><svg class="ic"><use href="#nfirst"/></svg></button>
          <button class="btn tb" aria-label="上一条"><svg class="ic"><use href="#nprev"/></svg></button>
          <button class="btn tb" aria-label="下一条"><svg class="ic"><use href="#nnext"/></svg></button>
          <button class="btn tb" aria-label="末条"><svg class="ic"><use href="#nlast"/></svg></button><span class="vsep"></span>
          <button class="btn tb" aria-label="上移"><svg class="ic"><use href="#nup"/></svg></button>
          <button class="btn tb" aria-label="下移"><svg class="ic"><use href="#ndn"/></svg></button><span class="vsep"></span>
          <button class="btn tb" disabled><svg class="ic"><use href="#ins"/></svg>插入</button>
          <button class="btn tb" disabled><svg class="ic"><use href="#del"/></svg>删除</button>
          <button class="btn tb"><svg class="ic"><use href="#scale"/></svg>缩尺配筋</button>
          <button class="btn tb"><svg class="ic"><use href="#info"/></svg>钢筋信息</button>
          <button class="btn tb"><svg class="ic"><use href="#lib"/></svg>钢筋图库</button>
          <button class="btn tb dd tight"><svg class="ic"><use href="#other"/></svg>其他</button>
          <button class="btn tb ms-1">关闭</button><span class="vsep"></span>
          <span class="text-nowrap ms-1">单构件钢筋总重(kg)：174.648</span>
        </div>
        <div class="frame gridframe">
          <div class="d-flex">
            <div class="flex-fill overflow-hidden song">
              <table class="data bars-grid">
                <colgroup><col style="width:33px"><col style="width:73px"><col style="width:56px"><col style="width:36px"><col style="width:33px"><col style="width:211px"><col style="width:166px"><col></colgroup>
                <thead><tr><th></th><th>筋号</th><th>直径(mm)</th><th>级别</th><th>图号</th><th>图形</th><th class="hot">计算公式</th><th class="ps-4">公式描述</th></tr></thead>
                <tbody>
                <tr class="bar tall"><th class="cur">1*</th><td>全部纵筋.1</td><td>25</td><td class="text-center"><svg class="rebar"><use href="#rb"/></svg></td><td>18</td>
                  <td><svg class="shape" viewBox="0 0 205 32"><path d="M33.500 10v13h145" fill="none" stroke="#000" stroke-width="2"/><text x="9" y="21" font-size="10" font-family="DejaVu Sans Mono">375</text><text x="88" y="16" font-size="10" font-family="DejaVu Sans Mono" fill="#f00">2090</text></svg></td>
                  <td class="pick">1150-20+1000-40+15*d</td><td>柱实际高度-保护层+基<br>度-保护层+节点设置中<br>的弯折</td></tr>
                <tr class="bar tall"><th>2</th><td>全部纵筋.2</td><td>16</td><td class="text-center"><svg class="rebar"><use href="#rb"/></svg></td><td>18</td>
                  <td><svg class="shape" viewBox="0 0 205 32"><path d="M33.500 10v13h145" fill="none" stroke="#000" stroke-width="2"/><text x="9" y="21" font-size="10" font-family="DejaVu Sans Mono">240</text><text x="88" y="16" font-size="10" font-family="DejaVu Sans Mono" fill="#f00">2090</text></svg></td>
                  <td>1150-20+1000-40+15*d</td><td>柱实际高度-保护层+基<br>度-保护层+节点设置中<br>的弯折</td></tr>
                <tr class="bar mid"><th>3</th><td>箍筋.1</td><td>10</td><td class="text-center"><svg class="rebar"><use href="#rb"/></svg></td><td>195</td>
                  <td><svg class="shape" viewBox="0 0 205 32"><path d="M85 6h33v21H85zM106 12l8-6M112 17l6-9" fill="none" stroke="#000" stroke-width="2"/><text x="58" y="21" font-size="10" font-family="DejaVu Sans Mono">1360</text><text x="87" y="24" font-size="10" font-family="DejaVu Sans Mono" fill="#f00">1530</text></svg></td>
                  <td>2*(1530+1360)+2*(11.9*d)</td><td></td></tr>
                <tr class="low"><th>4</th><td></td><td></td><td></td><td></td><td></td><td></td><td></td></tr>
                </tbody>
              </table>
            </div>
            <div class="sb v d-flex flex-column"><svg><use href="#up"/></svg><div class="thumb" style="height:31%"></div><svg class="mt-auto"><use href="#dn"/></svg></div>
          </div>
          <div class="sb h d-flex"><svg><use href="#lf"/></svg><div class="thumb" style="width:21%"></div><svg class="ms-auto me-3"><use href="#rg"/></svg></div>
        </div>
      </div>
    </div>
  </section>

  <aside class="rightcol d-flex flex-column song">
    <div class="whead paneltitle d-flex align-items-center me-1"><span>属性编辑器</span>
      <button class="ms-auto me-2" aria-label="固定"><svg width="10" height="10"><use href="#pinic"/></svg></button>
      <button class="ms-1" aria-label="关闭"><svg width="10" height="10"><use href="#xic"/></svg></button></div>
    <div class="frame propframe d-flex flex-fill overflow-hidden me-1 mb-1">
      <div class="flex-fill overflow-hidden">
        <table class="data prop"><colgroup><col style="width:21px"><col style="width:121px"><col></colgroup>
          <thead><tr><th></th><th>属性名称</th><th class="hot">属性值</th></tr></thead><tbody id="props"></tbody></table>
      </div>
      <div class="sb v d-flex flex-column ms-1"><svg><use href="#up"/></svg><div class="thumb" style="height:36%"></div><svg class="mt-auto"><use href="#dn"/></svg></div>
    </div>
    <div class="tabs2 d-flex align-items-end flex-shrink-0"><button>截面</button><button class="act">配筋</button></div>
    <div class="frame tabpage uifont me-1 flex-shrink-0">
      <div class="bars rowbar pill txtbar d-flex align-items-center">
        <span class="grip"></span>
        <button class="btn tb">布角筋</button><button class="btn tb">布边筋</button><button class="btn tb">特殊布筋</button><button class="btn tb">对齐钢筋</button><button class="btn tb">画箍筋</button><span class="vsep"></span><button class="btn tb">修改纵筋</button><button class="btn tb">修改箍筋</button>
        <button class="more">»</button>
      </div>
      <div class="bars rowbar pill d-flex align-items-center">
        <span class="grip"></span><label for="rebarinfo" class="c-gray ms-1">钢筋信息</label>
        <select id="rebarinfo" class="form-select combo framed"><option></option></select>
      </div>
      <div class="section">
        <svg viewBox="26 267 1245 266" preserveAspectRatio="xMidYMid slice" fill="none" stroke-width="3" aria-label="截面配筋图">
          <path d="M527 283h190M527 347h190M527 475h190M557 270v255M679 270v255" stroke="#555" stroke-dasharray="20 8"/><path d="M520 411h240M620 275v245" stroke="#888" stroke-dasharray="30 8 6 8"/>
          <g font-family="Liberation Sans, sans-serif" fill="#f0f" font-size="34"><text x="536" y="326">d</text><text x="568" y="326">d</text><text x="600" y="326">d</text><text x="632" y="326">d</text><text x="664" y="326">d</text><text x="696" y="326">d</text><text x="536" y="519">d</text><text x="568" y="519">d</text><text x="600" y="519">d</text><text x="632" y="519">d</text><text x="664" y="519">d</text><text x="696" y="519">d</text>
          <text x="504" y="360">6</text><text x="504" y="394">6</text><text x="504" y="428">6</text><text x="504" y="462">6</text><text x="504" y="496">6</text><text x="714" y="360">16</text><text x="714" y="394">16</text><text x="714" y="428">16</text><text x="714" y="462">16</text><text x="714" y="496">16</text></g>
          <g font-family="Liberation Sans, sans-serif" fill="#ff0" font-size="38"><text x="479" y="326">25</text><text x="708" y="326">25</text><text x="479" y="528">25</text><text x="708" y="528">25</text></g>
          <path d="M490 296h258v229H490z" stroke="#0f0" stroke-width="4"/><path d="M496 303h245v216H496z" stroke="#fff"/><path d="M501 307h237v209H501z" stroke="#f00" stroke-width="4"/>
          <path d="M559 368h120v89H559z" stroke="#fff"/><path d="M565 373h111v81H565z" stroke="#0f0" stroke-width="4"/><path d="M490 455h72v8h-72z" stroke="#0f0"/>
          <path d="M741 300l18-17" stroke="#fff"/><path d="M757 281h22" stroke="#ddd" stroke-width="8"/><path d="M783 283h30" stroke="#0a0" stroke-width="6" stroke-dasharray="6 2"/><text x="610" y="421" fill="#555" font-size="28" font-family="Liberation Sans, sans-serif">0</text>
        </svg>
      </div>
    </div>
    <div class="coordbar d-flex gap-1 flex-shrink-0"><div class="cell" style="width:34%">坐标 (X: 0 Y: 0)</div><div class="cell flex-fill"></div></div>
  </aside>
</main>

<footer class="statusbar d-flex song">
  <div class="cell" style="width:148px">X=322961 Y=14790</div><div class="cell" style="width:77px">层高:2.15m</div><div class="cell" style="width:97px">底标高:-2.2m</div><div class="cell" style="width:47px">1(1)</div><div class="cell flex-fill"></div><div class="cell" style="width:70px">121.6 FPS</div>
</footer>

<div class="taskbar d-flex">
  <button class="startbtn" aria-label="开始"><svg width="16" height="16" fill="#fff"><path d="M0 2.500l6.500-1V7.500H0zM7.500 1.300L16 0v7.500H7.500zM0 8.500h6.500v6L0 13.600zM7.500 8.500H16V16l-8.500-1.300z"/></svg></button>
  <div class="search d-flex align-items-center px-2">
    <svg width="22" height="22"><circle cx="11" cy="11" r="9" fill="none" stroke="#fff" stroke-width="2.500"/></svg>
    <input class="flex-fill" placeholder="在这里输入你要搜索的内容" aria-label="搜索">
    <svg width="16" height="18" class="me-1"><rect x="5.500" y="1.500" width="5" height="9" rx="2.500" fill="none" stroke="#aaa"/><path d="M3 8q0 5 5 5t5-5M8 13v4M5 17h6" fill="none" stroke="#aaa"/></svg>
  </div>
  <button class="far" aria-label="任务视图"><svg width="20" height="16"><path d="M4.500 1.500h11v13h-11zM2.500 3.500h-2v9h2M17.500 3.500h2v9h-2" fill="none" stroke="#fff"/></svg></button>
  <button class="pin far" aria-label="风扇"><svg viewBox="0 0 24 24"><path d="M2 8q0-6 6-6 5 0 5 5L8 11Q2 12 2 8zM16 2q6 0 6 6 0 5-5 5l-4-5q-1-6 3-6zM22 16q0 6-6 6-5 0-5-5l5-4q6-1 6 3zM8 22q-6 0-6-6 0-5 5-5l4 5q1 6-3 6z" fill="#eee" stroke="#020a0d" stroke-width=".8"/></svg></button>
  <button class="pin far" aria-label="浏览器"><svg viewBox="0 0 24 24"><path d="M6 13h14q0-8-7.500-8T5 13t8 8q5 0 7-4" fill="none" stroke="#eee" stroke-width="3.500"/><path d="M3 22Q-1 16 10 6q9-7 11-2" fill="none" stroke="#eee" stroke-width="1.500"/></svg></button>
  <button class="pin far" aria-label="提醒"><svg viewBox="0 0 24 24"><path d="M14 8a6 6 0 1 0 0 9q2-4-3-4M3 8q-4 9 5 13 6 2 9-2" fill="none" stroke="#ddd" stroke-width="1.800"/><path d="M13 10q2-1 2-5 0-4 3.500-4T22 5q0 4 2 5zM17 11h3v2h-3z" fill="#e0a010"/></svg></button>
  <svg width="14" height="40"><path d="M5.500 12v16M8.500 12v16" stroke="#444"/></svg>
  <button class="pin ms-2" aria-label="Edge"><svg viewBox="0 0 24 24"><path d="M1 11Q3 2 12 2q10 0 10 11H8q1 6 12 4v4q-16 4-16-7 0-5 5-7-6 0-8 4zm7-1h7q0-4-3.500-4T8 10z" fill="#0b78d8"/></svg></button>
  <button class="pin" aria-label="IE"><svg viewBox="0 0 24 24"><path d="M6 13h14q0-8-7.500-8T5 13t8 8q5 0 7-4" fill="none" stroke="#3aa5ec" stroke-width="3.500"/><path d="M3 22Q-1 16 10 6q9-7 12-3" fill="none" stroke="#f4c72a" stroke-width="2"/></svg></button>
  <button class="pin" aria-label="文件资源管理器"><svg viewBox="0 0 24 24"><path d="M2 4h8l2 2h10v14H2z" fill="#fbd978"/><path d="M6 13h12v7h-4v-4h-4v4H6z" fill="#37a2dd"/></svg></button>
  <button class="pin run" aria-label="360浏览器"><svg viewBox="0 0 24 24"><circle cx="12" cy="12" r="11" fill="#4cb83a"/><path d="M7 13h11q0-6-6-6t-6 6 6 6q4 0 6-3" fill="none" stroke="#fff" stroke-width="2.500"/></svg></button>
  <button class="pin run" aria-label="便笺"><svg viewBox="0 0 24 24"><rect x="1" y="1" width="22" height="22" rx="2" fill="#f09a1a"/><path d="M4 7h13v13H4z" fill="#fff8e0"/><path d="M6 11h8M6 14h6" stroke="#977"/><path d="M11 16L20 3" stroke="#b5351c" stroke-width="2"/></svg></button>
  <button class="pin run focus" aria-label="GGJ"><svg><use href="#app"/></svg></button>
  <button class="pin run" aria-label="广联达G"><svg viewBox="0 0 24 24"><path d="M23 1q-3 5-8 5-8 0-8 7 0 6 6 6 5 0 5-5-4-2-6 1 0-5 6-5 5 1 5 5-1 9-11 9Q1 23 1 13 1 2 13 2q6 1 10-1z" fill="#1b97e8"/></svg></button>
  <svg width="14" height="40"><path d="M8.500 12v16M11.500 12v16" stroke="#444"/></svg>
  <span class="align-self-center ms-3 text-nowrap">链接</span>
  <div class="text-center text-nowrap align-self-center ms-auto me-2">33%<br>CPU使用</div>
  <div class="tray d-flex">
    <button aria-label="展开"><svg viewBox="0 0 18 18"><path d="M4 11l5-5 5 5" fill="none" stroke="#fff" stroke-width="1.300"/></svg></button>
    <button aria-label="通知"><svg viewBox="0 0 18 18"><path d="M3 13q2-1 2-6 0-4 4-4t4 4q0 5 2 6zM7 14h4v1.500H7z" fill="#fff"/></svg></button>
    <button aria-label="电源"><svg viewBox="0 0 18 18"><path d="M5.500 6.500h10v7h-10zM16 8.500v3M1 4h5M2 4v3h3V4M3.500 7v3" fill="none" stroke="#fff" stroke-width="1.300"/><path d="M7 8h7v4H7z" fill="#fff"/></svg></button>
    <button aria-label="网络"><svg viewBox="0 0 18 18"><path d="M3 15Q4 6 15 4M6 15q1-6 9-8M9 15q1-4 6-5" fill="none" stroke="#ddd" stroke-width="1.300"/><circle cx="13" cy="14" r="1.500" fill="#fff"/></svg></button>
    <button aria-label="音量"><svg viewBox="0 0 18 18"><path d="M1.500 7h3l4-4v12l-4-4h-3zM11 6q2 3 0 6M13 4q4 5 0 10" fill="none" stroke="#fff"/></svg></button>
    <button class="ms-1 me-1" aria-label="键盘"><svg viewBox="0 0 18 18"><path d="M.5 4.500h17v9H.5z" fill="none" stroke="#fff"/><path d="M3 7h12M3 9h12M5 11.500h8" stroke="#fff" stroke-dasharray="2 1"/></svg></button>
    <button class="fs-5" aria-label="输入法">A</button>
    <button class="ms-1 me-2" aria-label="搜狗"><svg><use href="#sogou"/></svg></button>
  </div>
  <div class="text-center align-self-center mx-2 text-nowrap">22:13<br>2018/7/31</div>
  <button aria-label="操作中心" class="me-3"><svg width="18" height="18"><path d="M1.500 2.500h15v11h-6l-2 3v-3h-7z" fill="none" stroke="#fff"/></svg></button>
</div>

<script>
// Module tree: [level, icon, label, state]
const tree = [
  [1,'t-slab','现浇板(B)'],[0,'fold','轴线'],[0,'foldo','柱'],[1,'t-col','框柱(Z)','sel'],[1,'t-col','暗柱(Z)'],[1,'t-col','端柱(Z)'],[1,'t-pcol','构造柱(Z)'],
  [0,'fold','墙'],[0,'fold','门窗洞'],[0,'foldo','梁'],[1,'t-beam','梁(L)'],[1,'t-ring','圈梁(E)'],[0,'foldo','板'],[1,'t-slab','现浇板(B)'],[1,'t-spiral','螺旋板(B)'],
  [1,'t-cap','柱帽(V)'],[1,'t-hole','板洞(N)'],[1,'t-bar','板受力筋(S)'],[1,'t-neg','板负筋(F)'],[1,'t-band','楼层板带(H)'],[0,'foldo','基础'],[1,'t-fbeam','基础梁(F)'],
  [1,'t-raft','筏板基础(M)'],[1,'t-pit','集水坑(K)'],[1,'t-pier','柱墩(Y)'],[1,'t-bar','筏板主筋(R)'],[1,'t-neg','筏板负筋(X)'],[1,'t-iso','独立基础(P)'],[1,'t-strip','条形基础(T)'],[1,'t-pile','桩承台(V)'],[1,'t-fbeam','承台梁(G)']];
document.getElementById('tree').innerHTML = tree.map(([lv, ic, name, st], i) => {
  const svg = `<svg class="ic"><use href="#${ic}"/></svg>`;
  if (lv) {
    const mid = tree[i + 1] && tree[i + 1][0];
    return `<li class="leaf ${mid ? 'mid' : ''} ${st || ''}">${st ? '<i class="back"></i>' : ''}<i class="tail"></i>${svg}<span class="name">${name}</span></li>`;
  }
  const tw = ic === 'foldo' ? '<path d="M1 3l4 4 4-4" fill="none" stroke="#333" stroke-width="1.500"/>' : '<path d="M3 1l4 4-4 4" fill="none" stroke="#999" stroke-width="1.300"/>';
  return `<li class="node"><svg class="tw">${tw}</svg>${svg}<span>${name}</span></li>`;
}).join('');

// Property rows: [name, value, name class, kind]
const R = '<svg class="rebar"><use href="#rb"/></svg>';
const props = [['名称','KZ-84',''],['类别','框架柱','c-blue'],['截面编辑','是','c-blue'],['截面形状','异形',''],['截面宽(B边)(mm)','1570','c-gray'],['截面高(H边)(mm)','1400','c-gray'],
  ['全部纵筋','4'+R+'25+22'+R+'16','c-gray'],['其它箍筋','','c-blue'],['备注','',''],['芯柱','','c-gray','g'],['截面宽(mm)','','','s'],['截面高(mm)','','','s'],['箍筋','','','s'],['纵筋','','','s'],
  ['其它属性','','c-gray','g'],['汇总信息','柱','','s'],['保护层厚度(mm)','(20)','','s'],['上加密范围(mm)','','','s'],['下加密范围(mm)','','','s'],['插筋构造','纵筋锚固','','s']];
document.getElementById('props').innerHTML = props.map(([n, v, c, k], i) =>
  `<tr class="${i ? '' : 'first'}"><th class="${i ? '' : 'cur'}">${i + 1}</th><td class="nm ${c} ${k === 's' ? 'sub' : ''} ${k === 's' && (!props[i + 1] || props[i + 1][3] === 's') ? 'cont' : ''}">${k === 'g' ? '<button class="fold" aria-label="折叠"></button>' : ''}${n}</td><td class="v">${v}</td></tr>`).join('');

// Latin runs inside the Song-style areas use a half-width monospaced face
document.querySelectorAll('.song').forEach(root => {
  const w = document.createTreeWalker(root, NodeFilter.SHOW_TEXT), list = [];
  while (w.nextNode()) list.push(w.currentNode);
  list.forEach(t => {
    const p = t.parentElement;
    if (!t.data.trim() || p.closest('svg,option,.lt,.tb,.more') || !/[!-~]/.test(t.data)) return;
    const s = document.createElement('span');
    s.innerHTML = t.data.replace(/[ -~]+/g, m => `<span class="lt">${m}</span>`);
    t.replaceWith(...s.childNodes);
  });
});
</script>
<script src="https://cdn.jsdelivr.net/npm/bootstrap@5.3.0/dist/js/bootstrap.bundle.min.js"></script>
</body>
</html>
